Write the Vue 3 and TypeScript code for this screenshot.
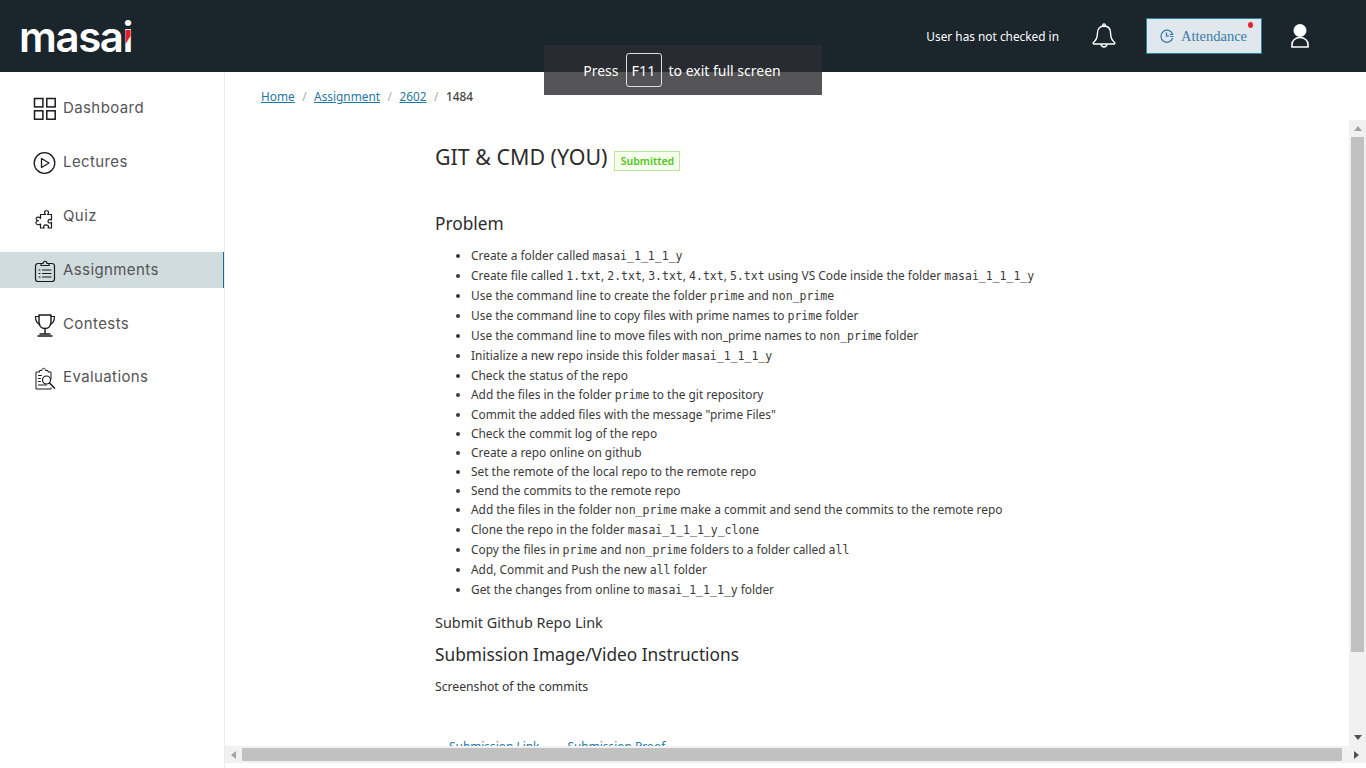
<script setup lang="ts">
interface Part { t: string; c?: boolean }
const crumbs = ['Home', 'Assignment', '2602']
const nav = [
  { k: 'dash', label: 'Dashboard' },
  { k: 'lect', label: 'Lectures' },
  { k: 'quiz', label: 'Quiz' },
  { k: 'assign', label: 'Assignments', active: true },
  { k: 'cont', label: 'Contests' },
  { k: 'eval', label: 'Evaluations' },
]
const p = (t: string): Part => ({ t })
const c = (t: string): Part => ({ t, c: true })
const items: Part[][] = [
  [p('Create a folder called '), c('masai_1_1_1_y')],
  [p('Create file called '), c('1.txt'), p(', '), c('2.txt'), p(', '), c('3.txt'), p(', '), c('4.txt'), p(', '), c('5.txt'), p(' using VS Code inside the folder '), c('masai_1_1_1_y')],
  [p('Use the command line to create the folder '), c('prime'), p(' and '), c('non_prime')],
  [p('Use the command line to copy files with prime names to '), c('prime'), p(' folder')],
  [p('Use the command line to move files with non_prime names to '), c('non_prime'), p(' folder')],
  [p('Initialize a new repo inside this folder '), c('masai_1_1_1_y')],
  [p('Check the status of the repo')],
  [p('Add the files in the folder '), c('prime'), p(' to the git repository')],
  [p('Commit the added files with the message "prime Files"')],
  [p('Check the commit log of the repo')],
  [p('Create a repo online on github')],
  [p('Set the remote of the local repo to the remote repo')],
  [p('Send the commits to the remote repo')],
  [p('Add the files in the folder '), c('non_prime'), p(' make a commit and send the commits to the remote repo')],
  [p('Clone the repo in the folder '), c('masai_1_1_1_y_clone')],
  [p('Copy the files in '), c('prime'), p(' and '), c('non_prime'), p(' folders to a folder called '), c('all')],
  [p('Add, Commit and Push the new '), c('all'), p(' folder')],
  [p('Get the changes from online to '), c('masai_1_1_1_y'), p(' folder')],
]
const hasCode = (parts: Part[]): boolean => parts.some((x) => x.c)
</script>

<template>
  <div class="page">
    <header class="top">
      <div class="logo">
        <span class="logo-text">masai</span>
        <svg class="wedge" width="6" height="15" viewBox="0 0 6 15"><polygon points="5.500,0 5.500,6 0.500,14 0.500,0" fill="#e0202a" /></svg>
      </div>
      <div class="top-right">
        <span class="checkin">User has not checked in</span>
        <svg class="bell" width="24" height="26" viewBox="0 0 24 26" fill="none" stroke="#fff" stroke-width="1.400" stroke-linejoin="round">
          <path d="M12 3c-4.400 0-6.600 3.200-6.600 7.500 0 4.600-1.400 7-4 9-.5.5-.2 1.500.6 1.500h20c.8 0 1.100-1 .6-1.500-2.600-2-4-4.400-4-9C18.600 6.200 16.400 3 12 3z" />
          <circle cx="12" cy="2.200" r="1.300" />
          <path d="M9 21.200c.3 1.900 1.500 2.800 3 2.800s2.700-.9 3-2.800" />
        </svg>
        <button class="attend">
          <svg width="14" height="14" viewBox="0 0 14 14" fill="none" stroke="#3a7ca5" stroke-width="1.300">
            <path d="M12.600 5.200A6 6 0 1 0 12.700 9" />
            <path d="M6.500 3.500v3.700h2.300" />
            <path d="M9.500 5.500h4M10 7.500h3.500" stroke-width="1" />
          </svg>
          <span>Attendance</span>
          <i class="dot"></i>
        </button>
        <svg class="user" width="18" height="24" viewBox="0 0 18 24">
          <circle cx="9" cy="6.500" r="6.500" fill="#fff" />
          <path d="M1 23v-2.500C1 16.500 4.500 13.500 9 13.500s8 3 8 7V23z" fill="none" stroke="#fff" stroke-width="1.600" />
        </svg>
      </div>
    </header>

    <div class="body">
      <aside class="side">
        <div v-for="n in nav" :key="n.k" class="nav" :class="{ on: n.active }">
          <svg class="ico" width="24" height="24" viewBox="0 0 24 24" fill="none" stroke="#1a1a1a" stroke-width="1.200" stroke-linejoin="round" stroke-linecap="round">
            <template v-if="n.k === 'dash'">
              <rect x="1.500" y="1.500" width="8.400" height="8.400" stroke-width="1.500" stroke-linejoin="miter" />
              <rect x="13.800" y="1.500" width="8.400" height="8.400" stroke-width="1.500" stroke-linejoin="miter" />
              <rect x="1.500" y="13.800" width="8.400" height="8.400" stroke-width="1.500" stroke-linejoin="miter" />
              <rect x="13.800" y="13.800" width="8.400" height="8.400" stroke-width="1.500" stroke-linejoin="miter" />
            </template>
            <template v-else-if="n.k === 'lect'">
              <circle cx="11.500" cy="12" r="10.300" stroke-width="1.300" />
              <path d="M8.500 7.500v9l7.500-4.500z" stroke-width="1.300" />
            </template>
            <template v-else-if="n.k === 'quiz'">
              <path d="M10 9.500h2.500c-1-1.200-1.200-2-.9-2.800.5-1.300 3.400-1.300 3.900 0 .3.800.1 1.600-.9 2.800h3.900v5.500c-1.500-1-3.500-.6-3.500 1.200s2 2.200 3.500 1.300V23H15c.8-1 .8-2-.3-2.600-1.100-.5-3-.5-3.700.3-.6.7-.5 1.500.2 2.300H7.500v-4c-1.500 1.200-4 .9-4.500-.8-.4-1.500 1-2.700 2.300-2.500-1.800-.3-2.800-2-1.700-3.100.9-.9 2.700-.6 3.900.7v-3.800z" />
            </template>
            <template v-else-if="n.k === 'assign'">
              <path d="M8 4.500H5a2.500 2.500 0 0 0-2.500 2.500v13A2.500 2.500 0 0 0 5 22.500h14a2.500 2.500 0 0 0 2.500-2.500V7A2.500 2.500 0 0 0 19 4.500h-3" />
              <path d="M8 6.500V4.500h2c0-3 4-3 4 0h2v2z" />
              <path d="M6 11h1M6 14.500h1M6 18h1M9.500 11h8.500M9.500 14.500h8.500M9.500 18h8.500" />
            </template>
            <template v-else-if="n.k === 'cont'">
              <path d="M6 2h12v7c0 4-2.500 6.500-6 6.500S6 13 6 9z" stroke-width="1.400" />
              <path d="M6 3.500H2.500c0 4 1 7 4.500 8M18 3.500h3.500c0 4-1 7-4.500 8" />
              <path d="M12 15.500v5M7 21h10M5 23h14" stroke-width="1.400" />
            </template>
            <template v-else>
              <path d="M18 13V6H15V4.500h-2.500C12.300 1.500 9 1.500 8.800 4.500H6.500V6H3v17h15v-1" stroke-width="1" />
              <circle cx="13.500" cy="14" r="4" stroke-width="1.200" />
              <path d="M16.500 17l5 5" stroke-width="1.600" />
              <path d="M5.500 9.500h3M5.500 12.500h2M5.500 15.500h2M5.500 19h8" stroke-width="1" />
            </template>
          </svg>
          <span>{{ n.label }}</span>
        </div>
      </aside>

      <main class="main">
        <nav class="crumbs">
          <template v-for="b in crumbs" :key="b">
            <a>{{ b }}</a><span class="sep">/</span>
          </template>
          <span class="cur">1484</span>
        </nav>
        <div class="pane">
          <div class="scroll">
            <div class="title-row">
              <h1>GIT &amp; CMD (YOU)</h1>
              <span class="tag">Submitted</span>
            </div>
            <h2 class="problem">Problem</h2>
            <ul>
              <li v-for="(parts, i) in items" :key="i" :class="{ tall: hasCode(parts) }">
                <template v-for="(x, j) in parts" :key="j"><code v-if="x.c">{{ x.t }}</code><template v-else>{{ x.t }}</template></template>
              </li>
            </ul>
            <p class="submit">Submit Github Repo Link</p>
            <h2 class="inst">Submission Image/Video Instructions</h2>
            <p class="shot">Screenshot of the commits</p>
            <div class="tabs">
              <a>Submission Link</a>
              <a>Submission Proof</a>
            </div>
          </div>
          <div class="vbar">
            <i class="tri up"></i>
            <div class="vtrack"><div class="vthumb"></div></div>
            <i class="tri down"></i>
          </div>
        </div>
        <div class="hbar">
          <i class="tri left"></i>
          <div class="hthumb"></div>
          <i class="tri right"></i>
        </div>
        <div class="tail"></div>
      </main>
    </div>

    <div class="toast">
      <span>Press</span><span class="key">F11</span><span>to exit full screen</span>
    </div>
  </div>
</template>

<style>
html, body { margin: 0; overflow: hidden; background: #fff; }
</style>

<style scoped>
.page { position: relative; width: 1366px; height: 768px; overflow: hidden; display: flex; flex-direction: column; font-family: "Noto Sans", sans-serif; color: #333; }
.top { height: 72px; flex: none; background: #1a252c; display: flex; align-items: center; justify-content: space-between; padding: 0 57px 0 22px; }
.logo { position: relative; width: 110px; height: 52px; }
.logo-text { display: block; font-family: Inter, sans-serif; font-weight: 600; font-size: 42px; line-height: 52px; letter-spacing: -1.400px; color: #fff; margin: 1px 0 0 -3px; }
.wedge { position: absolute; left: 103px; top: 20px; }
.top-right { display: flex; align-items: center; }
.checkin { color: #fff; font-size: 11.850px; margin-right: 33px; }
.bell { margin-right: 30px; }
.attend { position: relative; width: 116px; height: 36px; box-sizing: border-box; border: 1px solid #2f7ea8; background: #e0e8ee; display: flex; align-items: center; gap: 7px; padding: 0 0 0 13px; font-family: "Liberation Serif", serif; font-size: 14.500px; color: #3a7ca5; margin-right: 29px; }
.dot { position: absolute; top: 3px; right: 8px; width: 5px; height: 6px; border-radius: 50%; background: #e3262e; }
.body { flex: 1; display: flex; min-height: 0; }
.side { width: 225px; flex: none; box-sizing: border-box; border-right: 1px solid #e8ebf5; padding-top: 18px; display: flex; flex-direction: column; gap: 18px; }
.nav { height: 36px; display: flex; align-items: center; gap: 6px; padding-left: 33px; font-family: Inter, sans-serif; font-size: 15px; letter-spacing: .4px; color: #555; box-sizing: border-box; }
.nav span { position: relative; top: -1px; }
.nav:last-child { margin-top: -1px; }
.nav.on { background: #d0dcde; border-right: 1px solid #1f6a8a; }
.ico { flex: none; margin-top: 1px; }
.main { flex: 1; min-width: 0; display: flex; flex-direction: column; }
.crumbs { height: 48px; flex: none; box-sizing: border-box; padding: 14px 0 0 36px; font-size: 11.850px; line-height: 20px; }
.crumbs a { color: #1f77a3; text-decoration: underline; }
.sep { color: #aaa; margin: 0 7.500px; }
.cur { color: #444; font-weight: 500; }
.pane { flex: 1; min-height: 0; display: flex; }
.scroll { flex: 1; min-width: 0; overflow: hidden; padding-left: 210px; }
.title-row { display: flex; align-items: center; gap: 7px; height: 34px; margin-top: 20px; }
h1 { margin: 0; font-size: 21.400px; font-weight: 400; color: #2c2c2c; line-height: 34px; }
.tag { box-sizing: border-box; height: 20px; width: 66px; margin-top: 7px; text-align: center; border: 1px solid #b7eb8f; background: #f6ffed; color: #52c41a; font-size: 10.500px; line-height: 18px; font-weight: 600; }
h2 { margin: 0; font-weight: 400; color: #2c2c2c; font-size: 17.300px; line-height: 26px; }
.problem { margin-top: 37px; }
ul { margin: 9px 0 0; padding: 0 0 0 36px; font-size: 11.900px; color: #3a3a3a; }
li { height: 19px; line-height: 19px; }
li.tall { height: 20px; line-height: 18px; }
code { font-family: "DejaVu Sans Mono", monospace; font-size: 11.500px; line-height: 1; }
.submit { margin: 13px 0 0; font-size: 14.400px; line-height: 20px; color: #333; }
.inst { margin-top: 9px; }
.shot { margin: 9px 0 0; font-size: 12.200px; line-height: 20px; color: #333; }
.tabs { display: flex; gap: 28px; padding: 39px 0 0 14px; font-size: 11.900px; line-height: 20px; color: #1f77a3; }
.vbar { width: 17px; flex: none; background: #f1f1f1; display: flex; flex-direction: column; align-items: center; }
.vtrack { flex: 1; width: 100%; padding: 0 2px; box-sizing: border-box; }
.vthumb { height: 515px; background: #c1c1c1; }
.tri { display: block; width: 0; height: 0; flex: none; border-style: solid; }
.tri.up { border-width: 0 4px 5px; border-color: transparent transparent #a3a3a3; margin: 6px 0 6px; }
.tri.down { border-width: 5px 4px 0; border-color: #505050 transparent transparent; margin: 6px 0 6px; }
.hbar { height: 17px; flex: none; background: #f1f1f1; display: flex; align-items: center; padding-left: 6px; padding-right: 6px; }
.tri.left { border-width: 4px 5px 4px 0; border-color: transparent #a3a3a3 transparent transparent; margin-right: 6px; }
.tri.right { border-width: 4px 0 4px 5px; border-color: transparent transparent transparent #505050; margin-left: 12px; }
.hthumb { width: 1100px; height: 13px; background: #c1c1c1; }
.tail { height: 5px; flex: none; background: #fff; }
.toast { position: absolute; left: 544px; top: 45px; width: 278px; height: 50px; box-sizing: border-box; padding-right: 2px; background: rgba(44, 44, 48, .81); color: #fff; display: flex; align-items: center; justify-content: center; gap: 7px; font-size: 14px; }
.key { box-sizing: border-box; width: 36px; height: 34px; border: 1px solid #ddd; border-radius: 3px; display: flex; align-items: center; justify-content: center; font-size: 14.500px; }
</style>
